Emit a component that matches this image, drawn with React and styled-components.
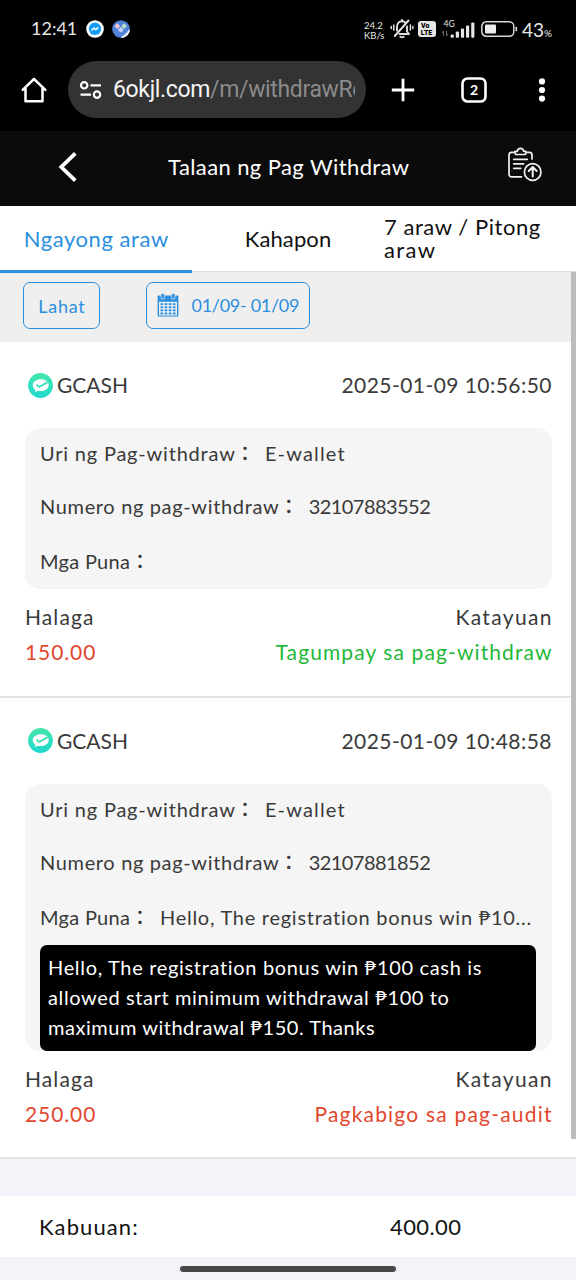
import styled, { createGlobalStyle } from 'styled-components';

const BLUE = '#2b8fdd';
const RED = '#e2472f';
const GREEN = '#1fb83a';

const GlobalStyle = createGlobalStyle`
    * {
        box-sizing: border-box;
    }
    body {
        margin: 0;
        background: #f3f3f9;
        font-family: Lato, "Noto Sans CJK JP", sans-serif;
        font-variant-ligatures: none;
    }
    svg {
        display: block;
        flex: none;
    }
`

const Screen = styled.div`
    position: relative;
    width: 576px;
    height: 1280px;
    overflow: hidden;
    display: flex;
    flex-direction: column;
    background: #f3f3f9;
`

/* one line of text, letter spacing differs from label to label */
const Label = styled.span`
    white-space: nowrap;
    letter-spacing: ${p => p.$track || 0}px;
    margin-right: ${p => -(p.$track || 0)}px;
`

const StatusBar = styled.div`
    height: 58px;
    flex: none;
    display: flex;
    align-items: center;
    padding: 0 26px 0 31px;
    background: #000;
    color: #e6e6e6;
`

const Clock = styled(Label)`
    font-size: 18px;
    width: 55px;
    padding-bottom: 2px;
`

const StatusRight = styled.div`
    display: flex;
    align-items: center;
    margin-left: auto;
`

const NetSpeed = styled.div`
    font-size: 9.5px;
    line-height: 10px;
    width: 26px;
    padding-top: 3px;
    white-space: nowrap;
`

const Percent = styled.span`
    font-size: 19px;
    width: 28px;
    margin-left: 4px;
    white-space: nowrap;
    small {
        font-size: 10px;
    }
`

const BrowserBar = styled.div`
    height: 73px;
    flex: none;
    display: flex;
    align-items: flex-start;
    padding: 3px 0 0 20px;
    background: #000;
`

const IconCell = styled.div`
    width: ${p => p.$w}px;
    height: 57px;
    display: flex;
    align-items: center;
    justify-content: flex-start;
`

const UrlPill = styled.div`
    width: 298px;
    height: 57px;
    border-radius: 29px;
    background: #333;
    display: flex;
    align-items: center;
    padding: 0 11px;
    margin-right: 25px;
`

const Url = styled.div`
    flex: 1;
    margin-left: 11px;
    overflow: hidden;
    white-space: nowrap;
    font-family: Roboto, sans-serif;
    font-size: 23px;
    line-height: 32px;
    letter-spacing: -0.35px;
    color: #8b8b8b;
    b {
        font-weight: 400;
        color: #f4f4f4;
    }
`

const PageHeader = styled.header`
    height: 75px;
    flex: none;
    display: flex;
    align-items: center;
    padding: 0 33px 4px 58px;
    background: #0b0b0b;
    color: #fff;
    > svg:last-child {
        margin-bottom: 5px;
    }
`

const Title = styled.h1`
    flex: 1;
    margin: 0;
    padding-left: 90px;
    font-size: 22px;
    font-weight: 400;
    line-height: 30px;
`

const Tabs = styled.nav`
    position: relative;
    height: 66px;
    flex: none;
    display: grid;
    grid-template-columns: 1fr 1fr 1fr;
    background: #fff;
    border-bottom: 1px solid #dadddd;
`

const Tab = styled.div`
    display: flex;
    align-items: center;
    justify-content: center;
    height: 67px;
    font-size: 22px;
    line-height: 23px;
    color: ${p => p.$active ? BLUE : '#111'};
    border-bottom: 3px solid ${p => p.$active ? BLUE : 'transparent'};
`

const TwoLines = styled.div`
    width: 192px;
    display: flex;
    flex-direction: column;
`

const Filters = styled.div`
    height: 70px;
    flex: none;
    display: flex;
    gap: 46px;
    padding: 10px 23px;
    background: #efefef;
`

const FilterButton = styled.div`
    width: ${p => p.$w}px;
    height: 47px;
    display: flex;
    align-items: center;
    justify-content: center;
    gap: 13px;
    padding-bottom: ${p => p.$lift || 0}px;
    border: 1.5px solid ${BLUE};
    border-radius: 7px;
    color: ${BLUE};
    font-size: 18px;
`

const Record = styled.section`
    flex: none;
    padding: 0 24.5px 26.5px 25px;
    background: #fff;
    border-bottom: 2px solid #e2e2e4;
    color: #3a3a3a;
    font-size: 21px;
`

const RecordHead = styled.div`
    height: 86px;
    display: flex;
    align-items: center;
    justify-content: space-between;
    line-height: 24px;
`

const Wallet = styled.div`
    display: flex;
    align-items: center;
    gap: 4px;
    padding-left: 3px;
`

const Details = styled.div`
    min-height: 161px;
    border-radius: 15px;
    background: #f5f5f5;
    padding: 0 15px;
    font-size: 20px;
`

const DetailRow = styled.div`
    height: ${p => p.$h || 54}px;
    display: flex;
    align-items: center;
`

const Colon = styled.span`
    width: 20px;
    margin-right: 10px;
    font-family: "Noto Sans CJK JP", sans-serif;
    font-weight: 500;
    line-height: 24px;
`

const Note = styled.div`
    width: 496px;
    height: 106px;
    display: flex;
    flex-direction: column;
    margin-top: 1px;
    padding: 7px 8px;
    border-radius: 7px;
    background: #000;
    color: #fff;
    font-size: 20px;
    line-height: 30px;
`

const Summary = styled.div`
    display: flex;
    justify-content: space-between;
    padding-top: 10px;
    line-height: 35px;
`

const SummaryCol = styled.div`
    display: flex;
    flex-direction: column;
    align-items: ${p => p.$end ? 'flex-end' : 'flex-start'};
`

const Value = styled(Label)`
    color: ${p => p.$color};
`

const Total = styled.footer`
    height: 61px;
    flex: none;
    display: grid;
    grid-template-columns: 351px 1fr;
    align-items: center;
    margin-top: 37px;
    padding: 0 39px 1px;
    background: #fff;
    color: #111;
    font-size: 22px;
`

const HomeBar = styled.div`
    width: 216px;
    height: 6px;
    margin: 9px auto 0;
    border-radius: 3px;
    background: #484848;
`

const ScrollThumb = styled.div`
    position: absolute;
    right: 0;
    top: 272px;
    width: 5px;
    height: 867px;
    background: #bcbcbc;
`

function MessengerIcon() {
    return (
        <svg width="18" height="18" viewBox="0 0 18 18" style={{ marginRight: 8 }}>
            <circle cx="9" cy="9" r="8.8" fill="#fff" />
            <circle cx="9" cy="8.8" r="6.2" fill="#149cf5" />
            <path d="M4.800 11.500v3.300l3-1.400z" fill="#149cf5" />
            <path d="M5.500 10.500l2.300-2.500 1.900 1.600 2.700-2.200" fill="none" stroke="#fff" strokeWidth="1.4" strokeLinejoin="round" />
        </svg>
    )
}

function CleanerIcon() {
    return (
        <svg width="18" height="18" viewBox="0 0 18 18">
            <circle cx="9" cy="9" r="8.8" fill="#4f82d8" />
            <rect x="3.2" y="4" width="4.2" height="4.2" rx="1.2" transform="rotate(45 5.3 6.1)" fill="#f0c3d3" />
            <rect x="10" y="4" width="4.2" height="4.2" rx="1.2" transform="rotate(45 12.1 6.1)" fill="#b9dcc9" />
            <rect x="6.6" y="7.6" width="4.4" height="4.4" rx="1.2" transform="rotate(45 8.8 9.8)" fill="#c3cff5" />
            <path d="M8.800 17.800l8.900-8.600c.3 4.800-3.700 8.800-8.900 8.600z" fill="#fff" />
            <path d="M11.500 15.800l4.500-4.300" stroke="#4f82d8" strokeWidth=".8" />
        </svg>
    )
}

function MutedBellIcon() {
    return (
        <svg width="24" height="22" viewBox="0 0 24 22" fill="none" stroke="#e2e2e2" strokeWidth="1.9" strokeLinecap="round" strokeLinejoin="round">
            <path d="M7 12.500V9c0-3.300 2-5.700 5-5.700 1.500 0 2.700.6 3.600 1.500M17 8.500V13.500l2 2.500H9.500M12 3V2" />
            <path d="M18.500 2.500L4.800 18" />
            <path d="M10.300 18.800q1.700 1.200 3.400 0" />
            <path d="M3.800 7v5M1.300 8.500v2M20.400 7v5M22.900 8.500v2" strokeWidth="1.5" />
        </svg>
    )
}

function VolteIcon() {
    return (
        <svg width="18" height="16" viewBox="0 0 18 16" style={{ marginLeft: 4 }}>
            <rect width="18" height="16" rx="3" fill="#e6e6e6" />
            <text x="3" y="7.3" fontSize="7" fontWeight="900" fontFamily="Roboto, sans-serif" fill="#000">Vo</text>
            <text x="2.8" y="14" fontSize="7" fontWeight="900" fontFamily="Roboto, sans-serif" fill="#000">LTE</text>
        </svg>
    )
}

function SignalIcon() {
    return (
        <svg width="35" height="20" viewBox="0 0 35 20" style={{ marginLeft: 5 }}>
            <text x="2.5" y="8" fontSize="8.5" fontFamily="Lato, sans-serif" fill="#e6e6e6">4G</text>
            <path d="M2.500 12v5M1 14l1.500-2M5.500 17v-5M5.500 17l1.500-2" stroke="#666" fill="none" />
            <g fill="#e6e6e6">
                <rect x="9.6" y="15.5" width="3.2" height="3.3" rx="1" />
                <rect x="14.8" y="12.5" width="3.2" height="6.3" rx="1" />
                <rect x="19.9" y="9.5" width="3.2" height="9.3" rx="1" />
                <rect x="25" y="6.5" width="3.2" height="12.3" rx="1" />
                <rect x="30.2" y="3.5" width="3.2" height="15.3" rx="1" />
            </g>
        </svg>
    )
}

function BatteryIcon() {
    return (
        <svg width="37" height="16" viewBox="0 0 37 16" style={{ marginLeft: 5 }}>
            <rect x=".8" y=".8" width="32" height="14.4" rx="4.500" fill="none" stroke="#d8d8d8" strokeWidth="1.5" />
            <rect x="4" y="3.5" width="11" height="9" rx="1" fill="#ececec" />
            <rect x="34.5" y="5.8" width="1.6" height="4.5" rx=".6" fill="#d8d8d8" />
        </svg>
    )
}

function HomeIcon() {
    return (
        <svg width="28" height="28" viewBox="0 0 28 28" fill="none" stroke="#fff" strokeWidth="2.5" strokeLinejoin="round" strokeLinecap="round">
            <path d="M2.700 13.800L14 3l11.300 10.800M5.500 12v13.200h17V12" />
        </svg>
    )
}

function SiteInfoIcon() {
    return (
        <svg width="23" height="20" viewBox="0 0 23 20" fill="none" stroke="#fff" strokeWidth="2.2">
            <circle cx="5.2" cy="5.3" r="3.2" />
            <path d="M11.500 5.300H22M1.500 14.600H12" />
            <circle cx="18" cy="14.6" r="3.2" />
        </svg>
    )
}

function PlusIcon() {
    return (
        <svg width="24" height="24" viewBox="0 0 24 24" stroke="#fff" strokeWidth="2.8">
            <path d="M12 .8v22.400M.8 12h22.400" />
        </svg>
    )
}

function TabCountIcon() {
    return (
        <svg width="26" height="26" viewBox="0 0 26 26">
            <rect x="1.5" y="1.5" width="23" height="23" rx="5" fill="none" stroke="#fff" strokeWidth="2.6" />
            <text x="13" y="18" textAnchor="middle" fontSize="14" fontWeight="700" fontFamily="Lato, sans-serif" fill="#fff">2</text>
        </svg>
    )
}

function MenuDotsIcon() {
    return (
        <svg width="8" height="26" viewBox="0 0 8 26" fill="#fff">
            <circle cx="4" cy="4.4" r="3.1" />
            <circle cx="4" cy="13" r="3.1" />
            <circle cx="4" cy="21.6" r="3.1" />
        </svg>
    )
}

function BackIcon() {
    return (
        <svg width="20" height="32" viewBox="0 0 20 32" fill="none" stroke="#fff" strokeWidth="3.8">
            <path d="M17.300 2.300L3.300 16l14 13.700" />
        </svg>
    )
}

function ReportIcon() {
    return (
        <svg width="36" height="36" viewBox="0 0 36 36" fill="none" stroke="#f2f2f2" strokeWidth="1.7" strokeLinecap="round" strokeLinejoin="round">
            <path d="M7 6.300H4.600A2.600 2.600 0 0 0 2 8.900v19.300a2.600 2.600 0 0 0 2.600 2.600H14.500M20 6.300h2.400A2.600 2.600 0 0 1 25 8.900V13" />
            <path d="M8 5.300h2.300c.3-1.800 1.500-3 3.200-3s2.900 1.200 3.200 3H19v1.500c0 1-.7 1.700-1.700 1.700H9.700C8.700 8.500 8 7.800 8 6.800z" />
            <path d="M6.700 13.300h13.600M6.700 17.800h10M6.700 22.300h7" />
            <circle cx="25.7" cy="26" r="8.3" />
            <path d="M25.700 30.500v-9M21.700 25l4-4 4 4" strokeWidth="2" />
        </svg>
    )
}

function CalendarIcon() {
    const cells = []
    for (let row = 0; row < 4; row++) {
        for (let col = 0; col < 4; col++) {
            cells.push(<rect key={`${row}${col}`} x={3.5 + col * 4.1} y={10.2 + row * 3.1} width="2.7" height="1.9" />)
        }
    }
    return (
        <svg width="22" height="24" viewBox="0 0 22 24">
            <rect x=".6" y="2.5" width="20.8" height="21" rx="1" fill={BLUE} />
            <path d="M2 8.800h18v13.700H2z" fill="#efefef" />
            <g fill={BLUE}>{cells}</g>
            <rect x="4" y=".3" width="3.6" height="5.8" rx="1.8" fill={BLUE} stroke="#efefef" strokeWidth=".8" />
            <rect x="14.4" y=".3" width="3.6" height="5.8" rx="1.8" fill={BLUE} stroke="#efefef" strokeWidth=".8" />
        </svg>
    )
}

function WalletIcon() {
    return (
        <svg width="25" height="25" viewBox="0 0 25 25">
            <defs>
                <linearGradient id="wallet" x1="0" y1="0" x2="0" y2="1">
                    <stop offset="0" stopColor="#45e6ac" />
                    <stop offset="1" stopColor="#1fd9cf" />
                </linearGradient>
            </defs>
            <circle cx="12.5" cy="12.5" r="12.4" fill="url(#wallet)" />
            <path d="M13 6.200c-4.600 0-8.200 2.500-8.200 6 0 1.900 1 3.500 2.600 4.600l-.5 2.400 2.900-1.500c1 .3 2 .4 3.200.4 4.500 0 7.700-2.600 7.700-6s-3.200-5.900-7.700-5.900z" fill="#fff" />
            <path d="M8.500 11.600l2.700 2.400 8.300-4.700" fill="none" stroke="#2edcb9" strokeWidth="1.7" />
        </svg>
    )
}

const records = [
    {
        id: '32107883552',
        date: '2025-01-09 10:56:50',
        remark: '',
        amount: '150.00',
        status: 'Tagumpay sa pag-withdraw',
        statusTrack: 1.1,
        color: GREEN,
        note: null
    },
    {
        id: '32107881852',
        date: '2025-01-09 10:48:58',
        remark: 'Hello, The registration bonus win ₱10...',
        amount: '250.00',
        status: 'Pagkabigo sa pag-audit',
        statusTrack: 1.2,
        color: RED,
        note: [
            ['Hello, The registration bonus win ₱100 cash is', 0.67],
            ['allowed start minimum withdrawal ₱100 to', 0.62],
            ['maximum withdrawal ₱150. Thanks', 0.53]
        ]
    }
]

function RecordCard({ record }) {
    return (
        <Record>
            <RecordHead>
                <Wallet>
                    <WalletIcon />
                    <Label>GCASH</Label>
                </Wallet>
                <Label $track={0.45}>{record.date}</Label>
            </RecordHead>
            <Details>
                <DetailRow $h={50}>
                    <Label $track={0.8}>Uri ng Pag-withdraw</Label>
                    <Colon>：</Colon>
                    <Label $track={1.15}>E-wallet</Label>
                </DetailRow>
                <DetailRow $h={56}>
                    <Label $track={0.65}>Numero ng pag-withdraw</Label>
                    <Colon>：</Colon>
                    <Label $track={-0.55}>{record.id}</Label>
                </DetailRow>
                <DetailRow>
                    <Label $track={0.3}>Mga Puna</Label>
                    <Colon>：</Colon>
                    <Label $track={0.73}>{record.remark}</Label>
                </DetailRow>
                {record.note && (
                    <Note>
                        {record.note.map(([line, track]) => <Label key={line} $track={track}>{line}</Label>)}
                    </Note>
                )}
            </Details>
            <Summary>
                <SummaryCol>
                    <Label $track={1.1}>Halaga</Label>
                    <Value $color={RED} $track={0.9}>{record.amount}</Value>
                </SummaryCol>
                <SummaryCol $end>
                    <Label $track={1.35}>Katayuan</Label>
                    <Value $color={record.color} $track={record.statusTrack}>{record.status}</Value>
                </SummaryCol>
            </Summary>
        </Record>
    )
}

function App() {
    return (
        <Screen>
            <GlobalStyle />
            <StatusBar>
                <Clock>12:41</Clock>
                <MessengerIcon />
                <CleanerIcon />
                <StatusRight>
                    <NetSpeed>24.2<br />KB/s</NetSpeed>
                    <MutedBellIcon />
                    <VolteIcon />
                    <SignalIcon />
                    <BatteryIcon />
                    <Percent>43<small>%</small></Percent>
                </StatusRight>
            </StatusBar>
            <BrowserBar>
                <IconCell $w={48}><HomeIcon /></IconCell>
                <UrlPill>
                    <SiteInfoIcon />
                    <Url><b>6okjl.com</b>/m/withdrawRe</Url>
                </UrlPill>
                <IconCell $w={70}><PlusIcon /></IconCell>
                <IconCell $w={77}><TabCountIcon /></IconCell>
                <IconCell $w={8}><MenuDotsIcon /></IconCell>
            </BrowserBar>
            <PageHeader>
                <BackIcon />
                <Title><Label $track={0.4}>Talaan ng Pag Withdraw</Label></Title>
                <ReportIcon />
            </PageHeader>
            <Tabs>
                <Tab $active><Label $track={0.55}>Ngayong araw</Label></Tab>
                <Tab><Label $track={0.1}>Kahapon</Label></Tab>
                <Tab>
                    <TwoLines>
                        <Label $track={0.55}>7 araw / Pitong</Label>
                        <Label $track={1.4}>araw</Label>
                    </TwoLines>
                </Tab>
            </Tabs>
            <Filters>
                <FilterButton $w={77}><Label $track={0.7}>Lahat</Label></FilterButton>
                <FilterButton $w={164} $lift={2}>
                    <CalendarIcon />
                    <Label $track={-0.3}>01/09- 01/09</Label>
                </FilterButton>
            </Filters>
            {records.map(record => <RecordCard key={record.id} record={record} />)}
            <Total>
                <Label $track={1.1}>Kabuuan:</Label>
                <Label $track={0.4}>400.00</Label>
            </Total>
            <HomeBar />
            <ScrollThumb />
        </Screen>
    )
}

export default App;
